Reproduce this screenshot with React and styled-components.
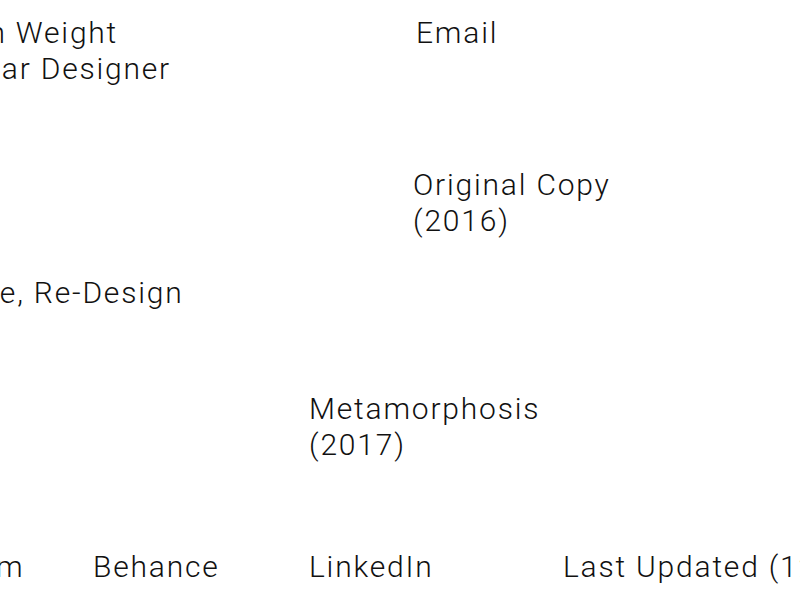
import React from "react";
import styled, { createGlobalStyle } from "styled-components";

const GlobalStyle = createGlobalStyle`
  html, body {
    margin: 0;
    padding: 0;
    background: #ffffff;
    overflow: hidden;
  }
  body {
    font-family: "Roboto", "Liberation Sans", sans-serif;
    font-weight: 300;
    color: #111111;
  }
`;

const Page = styled.div`
  width: 800px;
  height: 600px;
  overflow: hidden;
`;

const Sheet = styled.div`
  display: flex;
  flex-direction: column;
  padding-top: 15px;
  width: 1200px;
`;

const Row = styled.div`
  display: grid;
  grid-template-columns: 93px 216px 104px 150px 1fr;
  margin-top: ${props => props.$top || 0}px;
`;

const Text = styled.p`
  margin: 0;
  margin-left: ${props => props.$offset || 0}px;
  font-size: 30px;
  line-height: 36px;
  letter-spacing: 1.8px;
  white-space: nowrap;
  grid-column: ${props => props.$col} / span ${props => props.$span || 1};
`;

const Link = styled.a`
  margin-left: ${props => props.$offset || 0}px;
  font-size: 30px;
  line-height: 36px;
  letter-spacing: 1.8px;
  color: inherit;
  text-decoration: none;
  white-space: nowrap;
  grid-column: ${props => props.$col};
`;

export default function App() {
  return (
    <Page>
      <GlobalStyle />
      <Sheet>
        <Row>
          <Text $col={1} $span={3} $offset={-107}>
            Hannah Weight
            <br />
            Footwear Designer
          </Text>
          <Text $col={4} $offset={3}>Email</Text>
        </Row>

        <Row $top={80}>
          <Text $col={4} $span={2}>
            Original Copy
            <br />
            (2016)
          </Text>
        </Row>

        <Row $top={36}>
          <Text $col={1} $span={3} $offset={-48}>Nike, Re-Design</Text>
        </Row>

        <Row $top={80}>
          <Text $col={3} $span={2}>
            Metamorphosis
            <br />
            (2017)
          </Text>
        </Row>

        <Row $top={86}>
          <Link $col={1} $offset={-126}>Instagram</Link>
          <Link $col={2}>Behance</Link>
          <Link $col={3}>LinkedIn</Link>
          <Link $col={5}>Last Updated (12.2017)</Link>
        </Row>
      </Sheet>
    </Page>
  );
}
